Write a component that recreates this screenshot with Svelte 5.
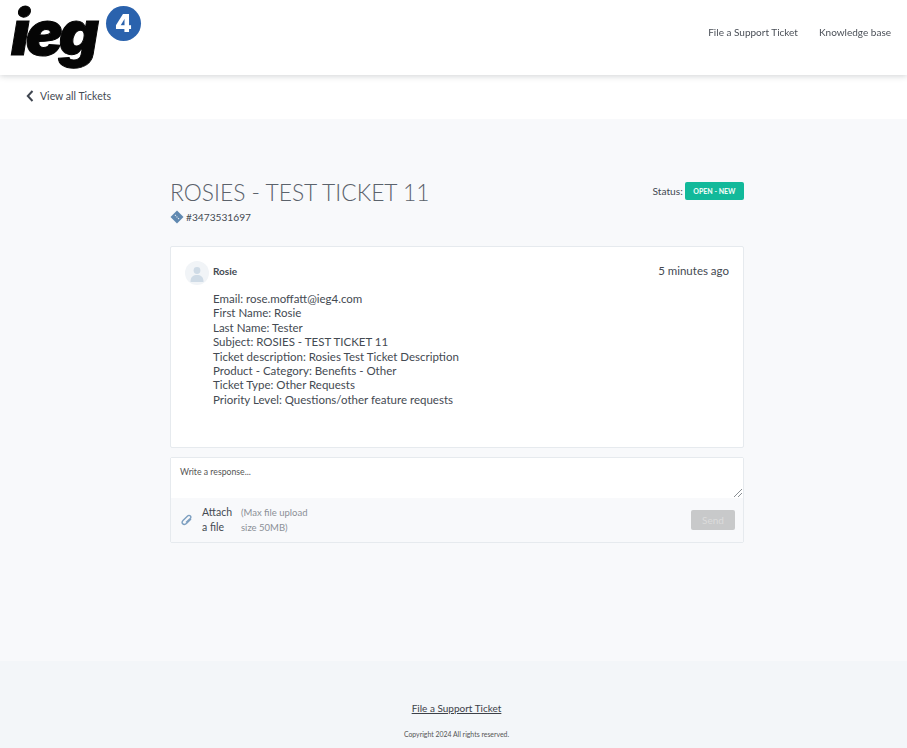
<script>
  const fields = [
    'Email: rose.moffatt@ieg4.com',
    'First Name: Rosie',
    'Last Name: Tester',
    'Subject: ROSIES - TEST TICKET 11',
    'Ticket description: Rosies Test Ticket Description',
    'Product - Category: Benefits - Other',
    'Ticket Type: Other Requests',
    'Priority Level: Questions/other feature requests'
  ];
</script>

<div class="page">
  <header class="top">
    <a class="logo" href="#top">
      <span class="word">ieg</span>
      <span class="badge4">4</span>
    </a>
    <nav class="nav">
      <a href="#s">File a Support Ticket</a>
      <a href="#k">Knowledge base</a>
    </nav>
  </header>

  <div class="sub">
    <svg class="chev" width="8" height="12" viewBox="0 0 8 12"><path d="M6.5 1 L1.8 6 L6.5 11" fill="none" stroke="#3f4650" stroke-width="2"/></svg>
    <a href="#all">View all Tickets</a>
  </div>

  <main class="main">
    <div class="wrap">
      <div class="head">
        <div>
          <h1>ROSIES - TEST TICKET 11</h1>
          <div class="id">
            <svg width="14" height="14" viewBox="0 0 14 14"><path d="M7 0.5 L13.5 7 L7 13.5 L0.5 7 Z" fill="#5f88b0"/><path d="M5 5 L9 9" stroke="#dfe8f0" stroke-width="1.2" stroke-dasharray="1.2 1"/></svg>
            <span>#3473531697</span>
          </div>
        </div>
        <div class="status">
          <span>Status:</span>
          <span class="pill">OPEN - NEW</span>
        </div>
      </div>

      <section class="card">
        <div class="avatar">
          <svg width="24" height="24" viewBox="0 0 24 24"><circle cx="12" cy="9.5" r="3.4" fill="#cfdbe6"/><path d="M5.5 21 C5.5 15.5 8.5 14 12 14 C15.5 14 18.5 15.5 18.5 21 Z" fill="#cfdbe6"/></svg>
        </div>
        <div class="body">
          <div class="who">
            <strong>Rosie</strong>
            <span class="ago">5 minutes ago</span>
          </div>
          <div class="lines">
            {#each fields as f}
              <div>{f}</div>
            {/each}
          </div>
        </div>
      </section>

      <section class="reply">
        <div class="input">
          <span>Write a response...</span>
          <svg class="grip" width="10" height="10" viewBox="0 0 10 10"><path d="M1 9 L9 1 M5 9 L9 5" stroke="#8a8f94" stroke-width="1"/></svg>
        </div>
        <div class="bar">
          <svg class="clip" width="12" height="12" viewBox="0 0 12 12"><path d="M10 5 L5.4 9.6 C4.2 10.8 2.4 10.6 1.7 9.8 C1 9 1 7.6 2 6.6 L6.6 2 C7.4 1.2 8.6 1.2 9.4 2 C10 2.8 10 3.8 9.2 4.6 L5 8.6" fill="none" stroke="#7d9fc0" stroke-width="1.4"/></svg>
          <div class="attach">Attach<br />a file</div>
          <div class="max">(Max file upload<br />size 50MB)</div>
          <button class="send" disabled>Send</button>
        </div>
      </section>
    </div>
  </main>

  <footer class="foot">
    <a href="#s">File a Support Ticket</a>
    <p>Copyright 2024 All rights reserved.</p>
  </footer>
</div>

<style>
  :global(body) {
    margin: 0;
    background: #fff;
    font-family: Lato, "Liberation Sans", sans-serif;
    color: #444a52;
  }
  a { color: inherit; text-decoration: none; }

  .page {
    display: flex;
    flex-direction: column;
    height: 748px;
    overflow: hidden;
    filter: blur(0.45px);
  }

  .top {
    position: relative;
    z-index: 1;
    height: 75px;
    flex: none;
    display: flex;
    align-items: center;
    justify-content: space-between;
    padding: 0 16px 0 11px;
    background: #fff;
    box-shadow: 0 1px 6px rgba(40, 50, 60, 0.22);
  }

  .logo {
    position: relative;
    display: block;
    width: 132px;
    height: 75px;
  }
  .word {
    position: absolute;
    left: 0;
    top: 0;
    display: block;
    padding-right: 8px;
    font: italic 900 62px/66px Inter, "Liberation Sans", sans-serif;
    letter-spacing: -4px;
    color: #050505;
    -webkit-text-stroke: 1px #050505;
    white-space: nowrap;
  }
  .badge4 {
    position: absolute;
    left: 95px;
    top: 6px;
    width: 35px;
    height: 35px;
    border-radius: 50%;
    background: #2a62ad;
    color: #fff;
    font: 900 24px/35px Inter, Lato, sans-serif;
    text-align: center;
  }

  .nav {
    display: flex;
    gap: 21px;
    font-size: 10px;
    color: #4a4f57;
    margin-top: -11px;
  }

  .sub {
    height: 44px;
    flex: none;
    display: flex;
    align-items: center;
    gap: 6px;
    padding: 0 0 2px 26px;
    box-sizing: border-box;
    background: #fff;
    font-size: 10.5px;
    color: #444a52;
  }

  .main {
    flex: 1;
    background: #f8f9fb;
    padding-top: 60px;
  }
  .wrap {
    width: 574px;
    margin-left: 170px;
  }

  .head {
    display: flex;
    justify-content: space-between;
    align-items: flex-start;
    height: 67px;
  }
  h1 {
    margin: 0;
    font-size: 22.8px;
    line-height: 26px;
    font-weight: 300;
    color: #5b626b;
  }
  .id {
    display: flex;
    align-items: center;
    gap: 2px;
    margin-top: 5px;
    font-size: 10.2px;
  }

  .status {
    display: flex;
    align-items: center;
    gap: 2px;
    margin-top: 3px;
    font-size: 10.2px;
  }
  .pill {
    background: #12b99a;
    color: #e8faf5;
    font-size: 7px;
    font-weight: 900;
    line-height: 18px;
    height: 18px;
    padding: 0 8.5px;
    border-radius: 2px;
  }

  .card {
    box-sizing: border-box;
    height: 202px;
    display: flex;
    gap: 4px;
    padding: 14px 14px 0 14px;
    background: #fff;
    border: 1px solid #e6eaee;
    border-radius: 2px;
    font-size: 11.5px;
  }
  .avatar {
    width: 24px;
    height: 24px;
    border-radius: 50%;
    background: #f1f4f7;
    overflow: hidden;
  }
  .body { flex: 1; }
  .who {
    display: flex;
    justify-content: space-between;
    align-items: center;
    height: 19px;
  }
  .who strong { font-size: 10px; font-weight: 700; }
  .ago { font-size: 11.5px; }
  .lines {
    margin-top: 12px;
    line-height: 14.4px;
  }

  .reply {
    box-sizing: border-box;
    height: 86px;
    margin-top: 9px;
    border: 1px solid #e6eaee;
    border-radius: 2px;
    display: flex;
    flex-direction: column;
  }
  .input {
    position: relative;
    height: 40px;
    flex: none;
    background: #fff;
    padding: 8px 9px;
    box-sizing: border-box;
    font-size: 8.7px;
    color: #555;
  }
  .grip {
    position: absolute;
    right: 0;
    bottom: 0;
  }
  .bar {
    flex: 1;
    display: flex;
    align-items: center;
    background: #f8f9fb;
    padding: 0 8px 0 10px;
    font-size: 9.5px;
    line-height: 15px;
  }
  .clip { flex: none; margin-right: 9px; }
  .attach { width: 39px; font-size: 10.5px; color: #444a52; }
  .max { color: #8b9097; }
  .send {
    margin-left: auto;
    width: 44px;
    height: 20px;
    border: 0;
    border-radius: 2px;
    background: #c8c9ca;
    color: #dcdcdc;
    font: 10px Lato, sans-serif;
    padding: 0;
  }

  .foot {
    height: 87px;
    flex: none;
    background: #f3f6f9;
    text-align: center;
    padding: 41px 0 0 6px;
    box-sizing: border-box;
  }
  .foot a {
    display: block;
    font-size: 10px;
    line-height: 13px;
    text-decoration: underline;
    color: #3c4148;
  }
  .foot p {
    margin: 15px 0 0;
    font-size: 6.9px;
    line-height: 8px;
    color: #555;
  }
</style>
